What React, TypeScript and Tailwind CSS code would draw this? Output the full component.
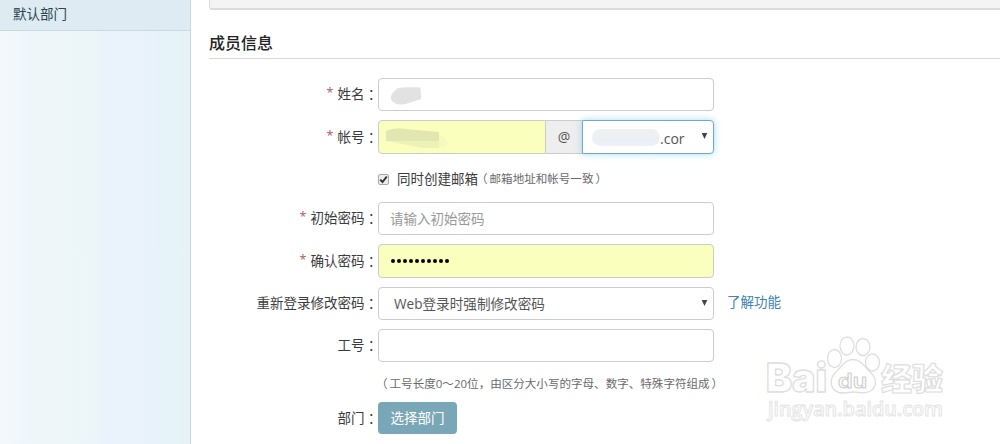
import { useState } from "react";
import type { ReactNode } from "react";

const inputStyle =
  "w-[336px] rounded-[4px] border border-[#ccc] bg-white px-[11px] text-[13.5px] text-[#555] outline-none placeholder:text-[#999]";

export default function MemberForm() {
  const [createMail, setCreateMail] = useState(true);

  return (
    <div className="relative flex h-[444px] w-[1000px] overflow-hidden bg-white font-['Open_Sans','Noto_Sans_CJK_SC',sans-serif] text-[13.5px] text-[#3c3c3c]">
      <aside className="w-[191px] shrink-0 border-r border-[#c9d8de] bg-[linear-gradient(to_right,#f3f8fd_0%,#eef6fa_22%,#ecf5f7_50%,#eaf3fc_54%,#eaf2fb_75%,#e6f3f9_86%,#e6f2f8_100%)]">
        <div className="h-[31px] border-b border-[#c5dbe2] bg-[#deebf2] pl-[13px] leading-[29px] text-[#2b4450]">
          默认部门
        </div>
      </aside>

      <main className="min-w-0 flex-1 pl-[18px]">
        <div className="h-[10px] rounded-bl-[3px] border-b-2 border-l border-[#dcdcdc] bg-[#f4f4f4]" />
        <h2 className="mt-[19px] h-[30px] border-b border-[#d9d9d9] text-[16px] leading-[28px] font-medium text-[#222]">
          成员信息
        </h2>

        <Row label="姓名" required className="mt-[19px] h-[33px]">
          <div className={`${inputStyle} flex h-[33px] items-center`}>
            <svg width="33" height="20" className="-ml-px mt-[4px]">
              <path
                d="M9 1 Q15 0 31 0.5 Q32 2 32 12 Q26 14 20 16 Q9 20 3 14 Q-1 8 9 1Z"
                fill="#e2e2e2"
              />
            </svg>
          </div>
        </Row>

        <Row label="帐号" required className="mt-[9px] h-[34px]">
          <div className="flex h-[34px] w-[168px] items-center rounded-l-[4px] border border-[#ccc] bg-[#faffbd] pt-[3px] pl-[7px]">
            <svg width="64" height="22">
              <path
                d="M0 8 L53 8 V20 L36 20 L20 17 L0 13Z"
                fill="#edf2b8"
              />
              <path d="M0 3 Q8 -1 20 1 L53 4 V13 H0Z" fill="#e2e7b2" />
              <path d="M53 7 Q65 12 60 18 L53 19Z" fill="#f4f9bc" />
            </svg>
          </div>
          <div className="h-[34px] w-[36px] border-y border-[#ccc] bg-[#eee] text-center text-[14px] leading-[31px] text-[#555]">
            @
          </div>
          <div className="flex h-[34px] w-[132px] items-center rounded-r-[4px] border border-[#72a9ca] bg-white pl-[9px] shadow-[0_0_7px_rgba(102,195,233,0.6)]">
            <div className="h-[17px] w-[68px] rounded-full bg-linear-to-b from-[#efeff0] to-[#eaf1f9]" />
            <span className="pt-[3px] text-[14px] text-[#555]">.cor</span>
            <Caret className="mr-[5px] mb-[2px] ml-auto" />
          </div>
        </Row>

        <Row className="mt-[12px] h-[26px]">
          <label className="flex items-center">
            <button
              onClick={() => setCreateMail(!createMail)}
              className="flex h-[11px] w-[11px] items-center justify-center rounded-[2px] border border-[#aaa] bg-[#ececec]"
            >
              {createMail && (
                <svg width="9" height="9" viewBox="0 0 9 9" fill="none">
                  <path d="M1.2 4.6 3.5 7 7.8 1.5" stroke="#333" strokeWidth="2" />
                </svg>
              )}
            </button>
            <span className="ml-[8px]">同时创建邮箱</span>
            <Note>邮箱地址和帐号一致</Note>
          </label>
        </Row>

        <Row label="初始密码" required className="mt-[10px] h-[33px]">
          <input
            placeholder="请输入初始密码"
            className={`${inputStyle} h-[33px]`}
          />
        </Row>

        <Row label="确认密码" required className="mt-[9px] h-[34px]">
          <div className="flex h-[34px] w-[336px] items-center gap-[2px] rounded-[4px] border border-[#ccc] bg-[#faffbd] pl-[12px]">
            {Array.from({ length: 10 }, (_, i) => (
              <span key={i} className="h-[4px] w-[4px] rounded-full bg-black" />
            ))}
          </div>
        </Row>

        <Row label="重新登录修改密码" className="mt-[9px] h-[33px]">
          <div className="flex h-[33px] w-[336px] items-center rounded-[4px] border border-[#ccc] bg-white pl-[15px] text-[13.6px] text-[#555]">
            <span className="pt-px">Web登录时强制修改密码</span>
            <Caret className="mr-[5px] mb-[2px] ml-auto" />
          </div>
          <a className="ml-[13px] pb-[2px] text-[#3c84ac]">了解功能</a>
        </Row>

        <Row label="工号" className="mt-[9px] h-[33px]">
          <input className={`${inputStyle} h-[33px]`} />
        </Row>

        <Row className="mt-[10px] h-[24px]">
          <Note>工号长度0～20位，由区分大小写的字母、数字、特殊字符组成</Note>
        </Row>

        <Row label="部门" className="mt-[6px] h-[32px]">
          <button className="h-[32px] w-[79px] rounded-[4px] bg-[#7aa7b7] text-[13.5px] leading-[32px] text-white">
            选择部门
          </button>
        </Row>
      </main>

      <Watermark />
    </div>
  );
}

function Row({
  label,
  required = false,
  className,
  children,
}: {
  label?: string;
  required?: boolean;
  className: string;
  children: ReactNode;
}) {
  return (
    <div className={`flex items-center ${className}`}>
      <div className="flex w-[169px] shrink-0 justify-end pr-px">
        {required && (
          <span className="mr-[4px] text-[12.5px] text-[#a9605e]">*</span>
        )}
        {label && <span>{label}</span>}
        {label && (
          <span className="-mr-px font-['Noto_Sans_CJK_JP',sans-serif]">：</span>
        )}
      </div>
      {children}
    </div>
  );
}

function Note({ children }: { children: ReactNode }) {
  return (
    <p className="flex text-[11.55px] whitespace-nowrap text-[#6a6a6a]">
      <span className="-ml-[2px] mr-[2px]">（</span>
      <span>{children}</span>
      <span className="ml-[2px]">）</span>
    </p>
  );
}

function Caret({ className }: { className: string }) {
  return (
    <svg width="7" height="6" className={className}>
      <path d="M0.7 0 H6.3 L3.5 6Z" fill="#444" />
    </svg>
  );
}

function Watermark() {
  return (
    <svg
      width="190"
      height="94"
      viewBox="760 335 190 94"
      className="pointer-events-none absolute top-[335px] left-[760px]"
      fill="#fff"
      stroke="#dedede"
      strokeWidth="1.3"
      strokeLinejoin="round"
    >
      <text
        x="766"
        y="391.5"
        fontSize="40"
        textLength="61"
        lengthAdjust="spacingAndGlyphs"
        className="font-['Inter',sans-serif] font-black"
      >
        Bai
      </text>
      <ellipse cx="834.5" cy="358.5" rx="7" ry="9" />
      <ellipse cx="847" cy="346" rx="7" ry="9" />
      <ellipse cx="863" cy="347" rx="7" ry="8.5" />
      <ellipse cx="872.5" cy="362.5" rx="7" ry="8.5" />
      <path d="M853 359.5C861 359.5 864 366 870 372C878 379 877 389 868 392C862 394 858 392 853.5 392C849 392 845 394 839 392.5C830 390 828.5 379 836 372C842 366 845 359.5 853 359.5Z" />
      <text
        x="838"
        y="387.5"
        fontSize="20"
        textLength="29"
        lengthAdjust="spacingAndGlyphs"
        stroke="#cfcfcf"
        strokeWidth="1"
        className="font-['Inter',sans-serif] font-semibold"
      >
        du
      </text>
      <text
        x="881"
        y="390"
        fontSize="31"
        strokeWidth="1.2"
        className="font-['Noto_Sans_CJK_SC',sans-serif] font-black"
      >
        经验
      </text>
      <text
        x="768"
        y="415.5"
        fontSize="20"
        textLength="175"
        lengthAdjust="spacingAndGlyphs"
        stroke="#e4e4e4"
        strokeWidth="1"
        className="font-['Open_Sans',sans-serif] font-semibold"
      >
        jingyan.baidu.com
      </text>
    </svg>
  );
}
